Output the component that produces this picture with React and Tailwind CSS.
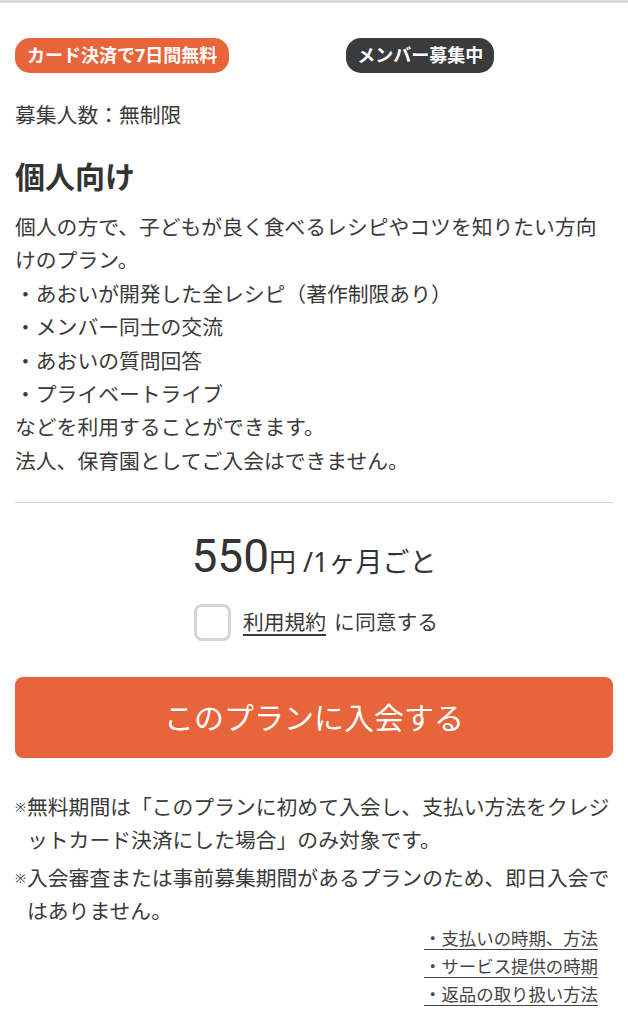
export default function App() {
  const font = { fontFamily: '"Noto Sans", "Noto Sans CJK JP", sans-serif' };

  return (
    <div className="w-[628px] min-h-[1024px] bg-white text-[#3a3a3a]" style={font}>
      <div className="h-[3px] bg-[#d9d9de]" />

      <div className="px-[15px]">
        {/* badges */}
        <div className="flex pt-[35px]">
          <span className="h-[35px] flex items-center rounded-[15px] bg-[#e8643a] px-[12px] text-[18px] font-bold text-white">
            カード決済で7日間無料
          </span>
          <span className="ml-[117px] h-[35px] flex items-center rounded-[15px] bg-[#3a3b3d] px-[11px] text-[18px] font-bold text-white">
            メンバー募集中
          </span>
        </div>

        <p className="mt-[26px] text-[20.8px] leading-[33px]">募集人数：無制限</p>

        <h2 className="mt-[25px] text-[30px] font-bold leading-[40px] text-[#333]">個人向け</h2>

        {/* description */}
        <div className="mt-[14px] text-[20.8px] leading-[33.4px]">
          <p>個人の方で、子どもが良く食べるレシピやコツを知りたい方向けのプラン。</p>
          <p>・あおいが開発した全レシピ（著作制限あり）</p>
          <p>・メンバー同士の交流</p>
          <p>・あおいの質問回答</p>
          <p>・プライベートライブ</p>
          <p>などを利用することができます。</p>
          <p>法人、保育園としてご入会はできません。</p>
        </div>

        <hr className="mt-[24px] border-t border-[#d4d4d4]" />

        {/* price */}
        <div className="mt-[28px] flex items-baseline justify-center text-[#333]">
          <span className="text-[46px] leading-[50px]" style={{ fontFamily: 'Roboto, "Noto Sans CJK JP", sans-serif' }}>550</span>
          <span className="text-[27px]">円</span>
          <span className="ml-[7px] text-[27px]">/1ヶ月ごと</span>
        </div>

        {/* agree */}
        <div className="mt-[21px] flex items-center justify-center gap-[12px] pl-[4px]">
          <span className="h-[37px] w-[37px] rounded-[8px] border-[3px] border-[#d4d4dc] bg-white" />
          <span className="text-[20.8px] leading-[33px]">
            <span className="underline underline-offset-4">利用規約</span>
            <span className="ml-[8px]">に同意する</span>
          </span>
        </div>

        <button className="mt-[36px] flex h-[81px] w-full items-center justify-center rounded-[8px] bg-[#e8643a] text-[30px] text-white">
          このプランに入会する
        </button>

        {/* notes */}
        <div className="mt-[33px] text-[20.8px] leading-[33px]">
          <div className="flex">
            <span className="w-[12px] shrink-0 text-[13px]">※</span>
            <p>無料期間は「このプランに初めて入会し、支払い方法をクレジットカード決済にした場合」のみ対象です。</p>
          </div>
          <div className="mt-[5px] flex">
            <span className="w-[12px] shrink-0 text-[13px]">※</span>
            <p>入会審査または事前募集期間があるプランのため、即日入会ではありません。</p>
          </div>
        </div>

        {/* links */}
        <div className="-mt-[4px] flex flex-col items-end pr-[15px] text-[17.4px] leading-[28px] text-[#444]">
          <a className="underline underline-offset-4">・支払いの時期、方法</a>
          <a className="underline underline-offset-4">・サービス提供の時期</a>
          <a className="underline underline-offset-4">・返品の取り扱い方法</a>
        </div>
      </div>
    </div>
  );
}
